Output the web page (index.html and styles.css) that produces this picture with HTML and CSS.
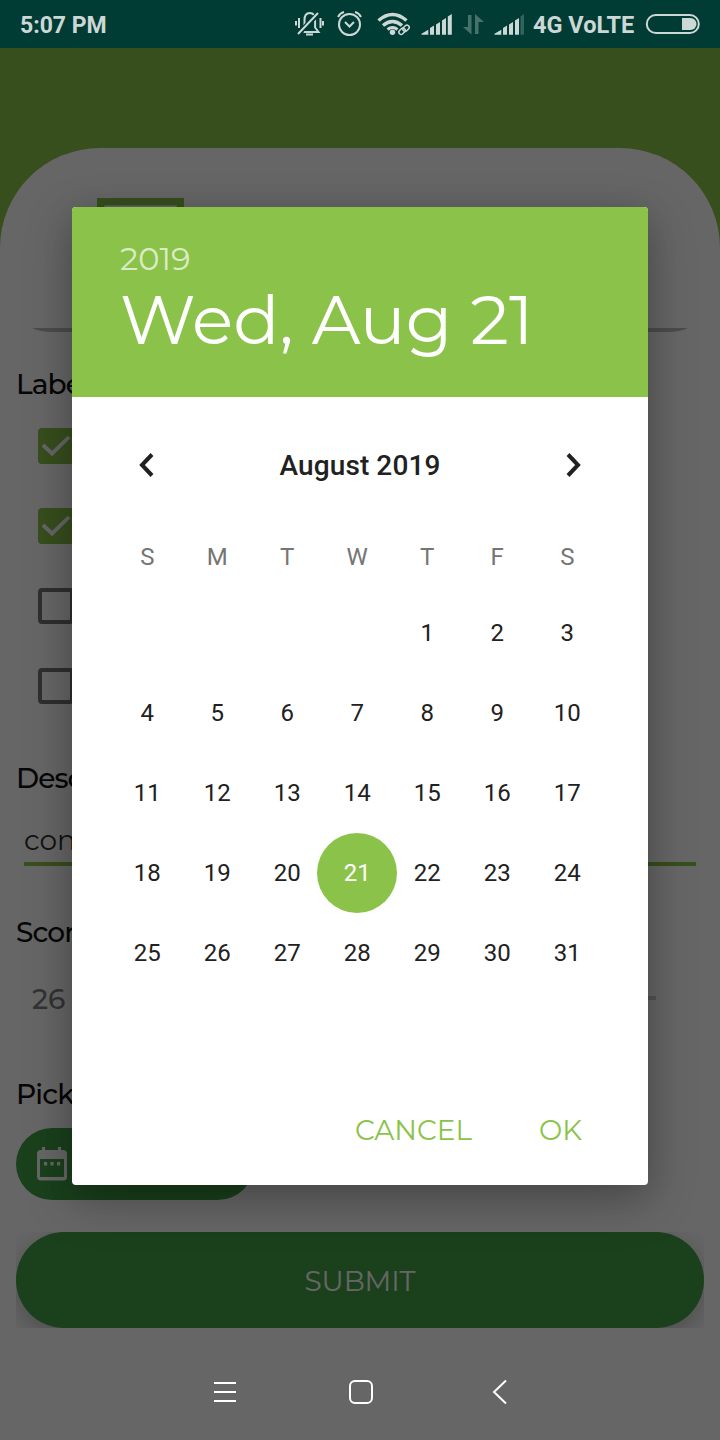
FILE: index.html
```html
<!DOCTYPE html>
<html lang="en">
<head>
<meta charset="utf-8">
<title>Date picker</title>
<link rel="stylesheet" href="styles.css">
</head>
<body>
<div class="screen">
  <header class="status">
    <span class="clock">5:07 PM</span>
    <svg class="status-icons" width="234" height="48" viewBox="290 0 234 48" fill="none" stroke="#ccd8d6" stroke-width="2">
      <path d="M302 29.500q2.500-1.500 2.500-6.500v-3q0-7 5.300-7t5.300 7v7.500l3.400 4.500h-15M306 34.500h7" />
      <path d="M298 34l21-21" stroke="#003c34" stroke-width="5"/>
      <path d="M298 34l20-21M299 18v10M296 21v4.500M320.500 18v10M323 21v4.500"/>
      <circle cx="349.500" cy="24.500" r="10.500"/>
      <path d="M345 22l4.500 4.500 4.500-4.500M338 17q2-4 6-5M361 17q-2-4-6-5"/>
      <g stroke-width="3.500"><path d="M378.500 20.500q14-12 28 0M383 25.500q9.500-8 19 0"/><path d="M387.500 29.500q5-4 10 0" stroke-width="3"/></g>
      <circle cx="392.500" cy="32.200" r="2.700" fill="#ccd8d6" stroke="none"/>
      <path stroke="#003c34" stroke-width="6" d="M401 33l7-6"/>
      <g stroke-width="1.500"><rect x="398.500" y="29" width="7" height="4.500" rx="2.200" transform="rotate(-45 402 31.200)"/><rect x="402.500" y="26" width="7" height="4.500" rx="2.200" transform="rotate(-45 406 28.200)"/></g>
      <g fill="#ccd8d6" stroke="none">
        <path d="M421.500 34.800v-1l6.800-4v5zM430 28l4-2.500v9.300h-4zM436 24.500l4-2.500v12.800h-4zM442 20.500l4-2.500v16.800h-4zM447.800 16.500l4-2.500v20.800h-4z"/>
        <path d="M494.500 34.800v-1l6.800-4v5zM503 28l4-2.500v9.300h-4zM509 24.500l4-2.500v12.800h-4zM515 20.500l4-2.500v16.800h-4z"/>
        <path opacity=".25" d="M520.500 16.500l3.500-2.500v20.800h-3.500z"/>
        <path opacity=".35" d="M468 15h3.500v19.500l-8.500-7.500h5zM475 34h3.500V22h5.500l-9-8z"/>
      </g>
    </svg>
    <span class="carrier">4G VoLTE</span>
    <svg width="56" height="24" viewBox="0 0 56 24"><rect x="1.800" y="3" width="52" height="18" rx="9" fill="none" stroke="#ccd8d6" stroke-width="2"/><path d="M37 6h8.500a6 6 0 0 1 0 12H37z" fill="#ccd8d6"/></svg>
  </header>

  <main class="app">
    <section class="sheet">
      <div class="hero">
        <svg class="logo" width="87" height="60" viewBox="0 0 87 60"><rect x="3.500" y="3.500" width="80" height="53" fill="none" stroke="#8bc34a" stroke-width="7"/><rect x="7.500" y="7.500" width="72" height="45" fill="none" stroke="#dcdcdc"/></svg>
        <svg width="656" height="4" viewBox="0 0 656 4"><path d="M0 0h656q-8 4-20 4H20Q8 4 0 0z" fill="#bdbdbd"/></svg>
      </div>
      <h2 class="label">Labels</h2>
      <div class="checks">
        <div class="check-row"><span class="box on"><svg width="36" height="36" viewBox="0 0 36 36"><path d="M5 17l9 8.500L31 9" fill="none" stroke="#fff" stroke-width="3.800"/></svg></span></div>
        <div class="check-row"><span class="box on"><svg width="36" height="36" viewBox="0 0 36 36"><path d="M5 17l9 8.500L31 9" fill="none" stroke="#fff" stroke-width="3.800"/></svg></span></div>
        <div class="check-row"><span class="box"></span></div>
        <div class="check-row"><span class="box"></span></div>
      </div>
      <h2 class="label desc">Desc</h2>
      <div class="input">cont</div>
      <h2 class="label score">Score</h2>
      <div class="slider"><span>26</span><span class="track"></span></div>
      <h2 class="label pick">Pick</h2>
      <div class="date-button">
        <svg width="32" height="36" viewBox="0 0 32 36"><path fill="#fff" fill-rule="evenodd" d="M4 4h2V1h3v3h13V1h3v3h2a4 4 0 0 1 4 4v23a3.500 3.500 0 0 1-3.500 3.500h-24A3.500 3.500 0 0 1 1 31V8a4 4 0 0 1 3-4zM4 13v18h24V13z"/><path fill="#fff" d="M8 16h3.200v3.500H8zM14.400 16h3.200v3.500h-3.200zM21 16h3.200v3.500H21z"/></svg>
      </div>
      <div class="submit-wrap"><div class="submit">SUBMIT</div></div>
    </section>
  </main>

  <div class="scrim">
    <section class="dialog">
      <div class="dialog-head">
        <svg width="500" height="140" viewBox="0 0 500 140">
          <text class="year" x="0" y="39" font-size="32" textLength="70.500" lengthAdjust="spacingAndGlyphs">2019</text>
          <text class="day" x="0" y="113" font-size="68" textLength="413.500" lengthAdjust="spacingAndGlyphs">Wed, Aug 21</text>
        </svg>
      </div>
      <div class="month">
        <svg width="24" height="28" viewBox="0 0 24 28"><path d="M17 3.500L7 14l10 10.500" fill="none" stroke="#212121" stroke-width="4"/></svg>
        <strong>August 2019</strong>
        <svg width="24" height="28" viewBox="0 0 24 28"><path d="M7 3.500l10 10.500-10 10.500" fill="none" stroke="#212121" stroke-width="4"/></svg>
      </div>
      <div class="week"><span>S</span><span>M</span><span>T</span><span>W</span><span>T</span><span>F</span><span>S</span></div>
      <div class="days">
        <span class="first">1</span><span>2</span><span>3</span>
        <span>4</span><span>5</span><span>6</span><span>7</span><span>8</span><span>9</span><span>10</span>
        <span>11</span><span>12</span><span>13</span><span>14</span><span>15</span><span>16</span><span>17</span>
        <span>18</span><span>19</span><span>20</span><span class="selected">21</span><span>22</span><span>23</span><span>24</span>
        <span>25</span><span>26</span><span>27</span><span>28</span><span>29</span><span>30</span><span>31</span>
      </div>
      <div class="actions">
        <svg width="118" height="32"><text x="0" y="27" font-size="28" textLength="117" lengthAdjust="spacingAndGlyphs">CANCEL</text></svg>
        <svg width="44" height="32"><text x="0" y="27" font-size="28" textLength="43" lengthAdjust="spacingAndGlyphs">OK</text></svg>
      </div>
    </section>
  </div>

  <nav class="nav">
    <svg width="24" height="24" viewBox="0 0 24 24"><path d="M1 3h22M1 12h22M1 21h22" stroke="#fff" stroke-width="2"/></svg>
    <svg width="26" height="26" viewBox="0 0 26 26"><rect x="2" y="2" width="22" height="22" rx="5" fill="none" stroke="#fff" stroke-width="2"/></svg>
    <svg class="back" width="16" height="26" viewBox="0 0 16 26"><path d="M14 1.500L2 13l12 11.500" fill="none" stroke="#fff" stroke-width="2"/></svg>
  </nav>
</div>
</body>
</html>
```
FILE: styles.css
```css
* { box-sizing: border-box; }
body { margin: 0; font-family: Roboto, sans-serif; }
svg { display: block; flex: none; overflow: visible; }
svg text { font-family: Montserrat, Inter, sans-serif; }

.screen { position: relative; width: 720px; height: 1440px; overflow: hidden; background: #fff; }

.status { position: relative; z-index: 3; display: flex; align-items: center; height: 48px; padding-left: 20px; background: #003c34; color: #ccd8d6; font-weight: 700; font-size: 23px; white-space: nowrap; }
.clock { width: 270px; padding-top: 2px; }
.carrier { width: 112px; padding-top: 2px; margin-left: 9px; font-size: 23.500px; }

.app { height: 1392px; padding-top: 100px; background: #8bc34a; }
.sheet { height: 1292px; padding: 0 16px; background: #fff; border-radius: 100px 100px 0 0; }
.hero { display: flex; flex-direction: column; justify-content: space-between; height: 184px; margin-bottom: 30px; padding: 50px 0 0 16px; }
.logo { margin-left: 65px; }
.label { height: 44px; margin: 0; font: 500 28px/44px Montserrat, Inter, sans-serif; letter-spacing: -.9px; color: #111; white-space: nowrap; }
.checks { padding-left: 22px; }
.check-row { display: flex; align-items: center; height: 80px; }
.box { width: 36px; height: 36px; border: 4px solid #757575; border-radius: 4px; }
.box.on { border: 0; background: #8bc34a; }
.desc { margin-top: 30px; }
.input { height: 66px; margin: 0 8px; padding-top: 18px; border-bottom: 4px solid #8bc34a; font: 400 28px/44px Montserrat, Inter, sans-serif; color: #333; }
.score { margin-top: 44px; }
.slider { display: flex; align-items: center; height: 90px; padding: 0 48px 0 16px; font: 500 28px/44px Montserrat, Inter, sans-serif; color: #808080; }
.track { flex: 1; height: 4px; margin: -2px 0 0 30px; background: #d0d0d0; }
.pick { margin-top: 28px; }
.date-button { display: flex; align-items: center; width: 238px; height: 72px; margin-top: 12px; padding-left: 20px; border-radius: 36px; background: #43a047; }
.submit-wrap { margin-top: 32px; height: 96px; overflow: hidden; }
.submit { display: flex; align-items: center; justify-content: center; height: 96px; padding-top: 2px; border-radius: 48px; background: #43a047; box-shadow: 0 8px 28px rgba(0, 0, 0, .26); color: #fff; font: 400 28px/44px Montserrat, Inter, sans-serif; letter-spacing: -.15px; }

.scrim { position: absolute; inset: 48px 0 0; z-index: 2; padding: 159px 72px 0; background: rgba(0, 0, 0, .6); }
.dialog { height: 978px; border-radius: 4px; background: #fff; box-shadow: 0 16px 48px rgba(0, 0, 0, .26), 0 4px 30px rgba(0, 0, 0, .1); }
.dialog-head { height: 190px; padding: 24px 48px; border-radius: 4px 4px 0 0; background: #8bc34a; }
.year { fill: rgba(255, 255, 255, .7); font-weight: 400; }
.day { fill: #fff; font-weight: 400; }
.month { display: flex; align-items: center; justify-content: space-between; height: 136px; padding: 0 63px; color: #212121; font-size: 28px; }
.month strong { font-weight: 500; letter-spacing: .1px; }
.week, .days { display: grid; grid-template-columns: repeat(7, 70px); margin-left: 40px; text-align: center; font-size: 24px; }
.week { color: #757575; line-height: 48px; height: 60px; text-indent: .5px; }
.days { grid-auto-rows: 80px; line-height: 80px; color: #212121; text-indent: .5px; }
.first { grid-column: 5; }
.selected { width: 80px; margin-left: -5px; border-radius: 50%; background: #8bc34a; color: #fff; }
.actions { display: flex; justify-content: flex-end; gap: 66px; padding: 120px 65px 0 0; fill: #8bc34a; }

.nav { position: absolute; inset: 1344px 0 0; z-index: 3; display: flex; align-items: center; gap: 111px; padding-left: 213px; }
.back { margin-left: 7px; }
```
